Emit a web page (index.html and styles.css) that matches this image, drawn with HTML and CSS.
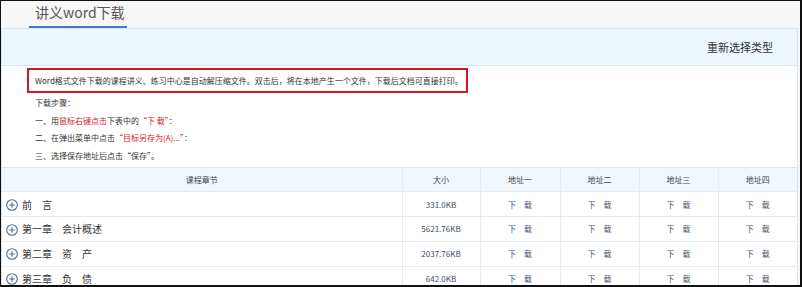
FILE: index.html
```html
<!DOCTYPE html>
<html lang="zh-CN">
<head>
<meta charset="utf-8">
<title>讲义word下载</title>
<link rel="stylesheet" href="styles.css">
</head>
<body>
<div class="frame">
  <div class="tabs">
    <div class="tab">讲义word下载</div>
  </div>
  <div class="panel">
    <div class="bar"><span class="reselect">重新选择类型</span></div>
    <div class="notice">Word格式文件下载的课程讲义、练习中心是自动解压缩文件。双击后，将在本地产生一个文件，下载后文档可直接打印。</div>
    <div class="steps">
      <p>下载步骤：</p>
      <p>一、用<span class="red">鼠标右键点击</span>下表中的<span class="red">“下 载”</span>：</p>
      <p>二、在弹出菜单中点击<span class="red">“目标另存为(A)...”</span>：</p>
      <p>三、选择保存地址后点击“保存”。</p>
    </div>
    <table class="list">
      <colgroup>
        <col class="c1"><col class="c2"><col class="c3"><col class="c4"><col class="c5"><col class="c6">
      </colgroup>
      <thead>
        <tr><th>课程章节</th><th>大小</th><th>地址一</th><th>地址二</th><th>地址三</th><th>地址四</th></tr>
      </thead>
      <tbody>
        <tr>
          <td class="name"><span class="plus"><svg viewBox="0 0 12 12" width="12" height="12"><circle cx="6" cy="6" r="5.3" fill="none" stroke="#4f6f92" stroke-width="1.1"/><path d="M6 3.2v5.6M3.2 6h5.6" stroke="#4f6f92" stroke-width="1.1"/></svg></span>前　言</td>
          <td class="size">331.0KB</td><td class="dl">下　载</td><td class="dl">下　载</td><td class="dl">下　载</td><td class="dl">下　载</td>
        </tr>
        <tr>
          <td class="name"><span class="plus"><svg viewBox="0 0 12 12" width="12" height="12"><circle cx="6" cy="6" r="5.3" fill="none" stroke="#4f6f92" stroke-width="1.1"/><path d="M6 3.2v5.6M3.2 6h5.6" stroke="#4f6f92" stroke-width="1.1"/></svg></span>第一章　会计概述</td>
          <td class="size">5621.76KB</td><td class="dl">下　载</td><td class="dl">下　载</td><td class="dl">下　载</td><td class="dl">下　载</td>
        </tr>
        <tr>
          <td class="name"><span class="plus"><svg viewBox="0 0 12 12" width="12" height="12"><circle cx="6" cy="6" r="5.3" fill="none" stroke="#4f6f92" stroke-width="1.1"/><path d="M6 3.2v5.6M3.2 6h5.6" stroke="#4f6f92" stroke-width="1.1"/></svg></span>第二章　资　产</td>
          <td class="size">2037.76KB</td><td class="dl">下　载</td><td class="dl">下　载</td><td class="dl">下　载</td><td class="dl">下　载</td>
        </tr>
        <tr>
          <td class="name"><span class="plus"><svg viewBox="0 0 12 12" width="12" height="12"><circle cx="6" cy="6" r="5.3" fill="none" stroke="#4f6f92" stroke-width="1.1"/><path d="M6 3.2v5.6M3.2 6h5.6" stroke="#4f6f92" stroke-width="1.1"/></svg></span>第三章　负　债</td>
          <td class="size">642.0KB</td><td class="dl">下　载</td><td class="dl">下　载</td><td class="dl">下　载</td><td class="dl">下　载</td>
        </tr>
      </tbody>
    </table>
  </div>
</div>
</body>
</html>
```
FILE: styles.css
```css
* { box-sizing: border-box; }
html, body { margin: 0; padding: 0; background: #fff; }
body { font-family: "Noto Sans CJK SC", "Noto Sans", sans-serif; color: #333; }

.frame {
  width: 802px;
  height: 287px;
  border: 1px solid #111;
  border-right-width: 2px;
  border-bottom-width: 2px;
  background: #f7f7f7;
  overflow: hidden;
}

.tabs {
  height: 27px;
  padding-left: 28px;
  display: flex;
  align-items: flex-end;
}
.tab {
  width: 98px;
  height: 27px;
  padding-left: 6px;
  font-size: 14px;
  line-height: 23px;
  color: #555;
  border-bottom: 2px solid #3d7fc4;
  white-space: nowrap;
}

.panel {
  margin-right: 2px;
  border: 1px solid #d7e7f0;
  border-bottom: none;
  background: #fff;
}

.bar {
  height: 37px;
  background: #eef7fc;
  border-bottom: 1px solid #d7e7f0;
  display: flex;
  align-items: center;
  justify-content: flex-end;
  padding-right: 24px;
}
.reselect { font-size: 11px; color: #333; }

.notice {
  margin: 2px 0 0 25px;
  width: 441px;
  height: 25px;
  border: 2px solid #d6161e;
  padding-left: 6px;
  font-size: 8px;
  line-height: 21px;
  white-space: nowrap;
  color: #333;
}

.steps { padding-left: 33px; margin-bottom: 2px; }
.steps p {
  margin: 0;
  height: 17.7px;
  font-size: 8px;
  line-height: 17.7px;
  color: #333;
  white-space: nowrap;
}
.steps p:first-child { margin-top: 1px; }
.red { color: #d4161e; }

.list {
  width: 100%;
  border-collapse: collapse;
  table-layout: fixed;
}
.c1 { width: 400px; }
.c2 { width: 78px; }
.c3 { width: 80px; }
.c4, .c5, .c6 { width: 79px; }

.list th, .list td {
  height: 24.7px;
  padding: 0;
  border: 1px solid #e4ecf2;
  text-align: center;
  font-size: 8px;
  font-weight: normal;
  white-space: nowrap;
}
.list tr > :first-child { border-left: none; }
.list tr > :last-child { border-right: none; }
.list th {
  background: #f0f7fd;
  color: #444;
  border-top-color: #dde9f2;
}
.list td.name {
  text-align: left;
  font-size: 10px;
  color: #333;
  padding-left: 4px;
}
.plus {
  display: inline-block;
  vertical-align: middle;
  width: 12px;
  height: 12px;
  margin-right: 4px;
  margin-top: -2px;
}
.plus svg { display: block; }
.list td.size { color: #3d4d6a; }
.list td.dl { color: #45536b; }
```
